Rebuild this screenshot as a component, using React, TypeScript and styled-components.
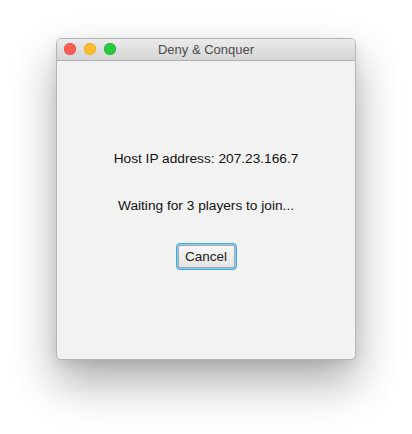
import React from "react";
import styled, { createGlobalStyle } from "styled-components";

const Global = createGlobalStyle`
  html, body { margin: 0; padding: 0; background: #ffffff; }
  body { font-family: "Liberation Sans", Arial, sans-serif; }
`;

const Page = styled.div`
  width: 412px;
  height: 434px;
  display: flex;
  justify-content: center;
  align-items: flex-start;
  padding-top: 38px;
  box-sizing: border-box;
`;

const Window = styled.div`
  width: 300px;
  height: 322px;
  border-radius: 5px;
  background: #f2f2f2;
  border: 1px solid #b5b5b5;
  box-sizing: border-box;
  overflow: hidden;
  display: flex;
  flex-direction: column;
  box-shadow: 0 22px 45px rgba(0, 0, 0, 0.33), 0 4px 12px rgba(0, 0, 0, 0.08);
`;

const TitleBar = styled.div`
  height: 21px;
  flex: none;
  position: relative;
  display: flex;
  align-items: center;
  justify-content: center;
  background: linear-gradient(#ebebeb, #d5d5d5);
  border-bottom: 1px solid #b0b0b0;
`;

const Lights = styled.div`
  position: absolute;
  left: 7px;
  top: 4px;
  display: flex;
  gap: 8px;
`;

const Light = styled.span<{ $c: string; $b: string }>`
  width: 12px;
  height: 12px;
  border-radius: 50%;
  background: ${(p) => p.$c};
  box-shadow: inset 0 0 0 0.5px ${(p) => p.$b};
`;

const Title = styled.div`
  font-size: 13px;
  color: #4d4d4d;
  line-height: 16px;
`;

const Content = styled.div`
  flex: 1;
  display: flex;
  flex-direction: column;
  align-items: center;
  padding-top: 90px;
`;

const Label = styled.div<{ $mt?: number }>`
  font-size: 13.7px;
  line-height: 16px;
  color: #111;
  margin-top: ${(p) => p.$mt ?? 0}px;
`;

const FocusRing = styled.div`
  margin-top: 29px;
  padding: 1px;
  border-radius: 4px;
  border: 1px solid #3ea6e0;
  background: #8fcff0;
`;

const Button = styled.button`
  display: block;
  width: 57px;
  height: 23px;
  border-radius: 2px;
  border: 1px solid #a5a5a5;
  background: linear-gradient(#f7f7f7, #e4e4e4);
  font-family: "Liberation Sans", Arial, sans-serif;
  font-size: 13.5px;
  color: #222;
  padding: 0;
  cursor: default;
`;

export default function App() {
  return (
    <>
      <Global />
      <Page>
        <Window>
          <TitleBar>
            <Lights>
              <Light $c="#fd5d57" $b="#e0443e" />
              <Light $c="#febc2e" $b="#dea123" />
              <Light $c="#28c840" $b="#1aab29" />
            </Lights>
            <Title>Deny &amp; Conquer</Title>
          </TitleBar>
          <Content>
            <Label>Host IP address: 207.23.166.7</Label>
            <Label $mt={31}>Waiting for 3 players to join...</Label>
            <FocusRing>
              <Button>Cancel</Button>
            </FocusRing>
          </Content>
        </Window>
      </Page>
    </>
  );
}
